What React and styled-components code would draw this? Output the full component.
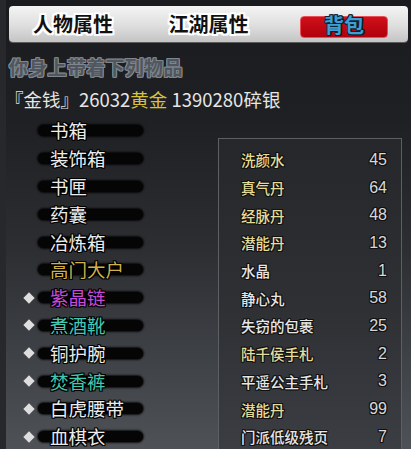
import React from 'react';
import styled, { createGlobalStyle } from 'styled-components';

const GlobalStyle = createGlobalStyle`
    html, body {
        margin: 0;
        padding: 0;
        overflow: hidden;
        background: #1b1c1f;
    }
    body {
        font-family: "Noto Sans CJK SC", "Noto Sans", sans-serif;
    }
`;

const outline = (c, w = 1) => `-${w}px -${w}px 0 ${c}, ${w}px -${w}px 0 ${c}, -${w}px ${w}px 0 ${c}, ${w}px ${w}px 0 ${c}, 0 ${w}px 0 ${c}, 0 -${w}px 0 ${c}, ${w}px 0 0 ${c}, -${w}px 0 0 ${c}`;

const Screen = styled.div`
    width: 411px;
    height: 449px;
    box-sizing: border-box;
    padding-top: 6px;
    background: linear-gradient(180deg, #1a1b1e 0px, #1f2023 120px, #2c2e32 250px, #4e5257 449px);
    border-left: 6px solid #26282b;
    overflow: hidden;
`;

const TabBar = styled.div`
    display: flex;
    gap: 47.5px;
    height: 36px;
    margin: 0 3px 0 3px;
    padding-left: 20px;
    box-sizing: border-box;
    border-radius: 4px;
    background: linear-gradient(180deg, #f4f4f4 0%, #dedede 55%, #c4c4c4 100%);
    box-shadow: 0 1px 0 #5a5a5a;
`;

const Tab = styled.div`
    width: 88px;
    height: 22px;
    margin-top: 10px;
    box-sizing: border-box;
    border-radius: 4px;
    display: flex;
    justify-content: center;
    align-items: flex-start;
    font-size: 20px;
    font-weight: bold;
    line-height: 16px;
    white-space: nowrap;
    color: ${p => (p.$active ? '#3f9ed4' : '#111')};
    text-shadow: ${p => (p.$active ? outline('#0d2230') : `${outline('#ffffff', 2)}, ${outline('#ffffff')}`)};
    background: ${p => (p.$active ? 'linear-gradient(180deg, #d0101a, #b0000c)' : 'none')};
    border: ${p => (p.$active ? '1px solid #e85058' : 'none')};
`;

const Caption = styled.div`
    margin: 11px 0 0 3px;
    height: 28px;
    line-height: 28px;
    font-size: 19px;
    font-weight: bold;
    color: #50565d;
    text-shadow: ${outline('#80868d')};
    letter-spacing: 0.3px;
`;

const Money = styled.div`
    margin: 5px 0 0 -1px;
    height: 26px;
    line-height: 26px;
    font-size: 18.5px;
    color: #e6e6e6;
    white-space: nowrap;
`;

const Gold = styled.span`
    color: #d8c040;
`;

const Body = styled.div`
    display: flex;
    margin-top: 5px;
`;

const LeftList = styled.div`
    width: 212px;
    display: flex;
    flex-direction: column;
`;

const Row = styled.div`
    height: 27.8px;
    display: flex;
    align-items: center;
    padding-left: 19px;
`;

const DiamondSlot = styled.div`
    width: 13px;
    display: flex;
    align-items: center;
`;

const Diamond = styled.span`
    display: block;
    width: 8px;
    height: 8px;
    background: #dedede;
    transform: rotate(45deg);
`;

const Pill = styled.div`
    width: 105px;
    height: 11px;
    box-sizing: border-box;
    padding-left: 12px;
    border-radius: 6px;
    background: #050505;
    box-shadow: 0 0 2px 1px rgba(0, 0, 0, 0.8);
    display: flex;
    align-items: center;
    font-size: 18.5px;
    line-height: 11px;
    white-space: nowrap;
    color: ${p => p.$color};
    text-shadow: ${outline('#000')};
`;

const Panel = styled.div`
    width: 184px;
    margin-top: 21px;
    height: 340px;
    box-sizing: border-box;
    padding: 7px 14px 0 22px;
    border: 1px solid #5c5f64;
    background: linear-gradient(180deg, #25272a 0%, #2e3034 50%, #3d4045 100%);
`;

const PanelRow = styled.div`
    height: 27.7px;
    display: flex;
    align-items: center;
    justify-content: space-between;
`;

const ItemName = styled.span`
    font-size: 14.5px;
    font-weight: 500;
    white-space: nowrap;
    color: ${p => (p.$yellow ? '#e4dc98' : '#e6e6e6')};
    text-shadow: ${outline('#111')};
`;

const Count = styled.span`
    font-family: "Liberation Sans", Arial, sans-serif;
    font-size: 16px;
    color: #d8d8d8;
    text-shadow: ${outline('#111')};
`;

const tabs = ['人物属性', '江湖属性', '背包'];

const carried = [
    { name: '书箱', color: '#ececec' },
    { name: '装饰箱', color: '#ececec' },
    { name: '书匣', color: '#ececec' },
    { name: '药囊', color: '#ececec' },
    { name: '冶炼箱', color: '#ececec' },
    { name: '高门大户', color: '#d2b04c' },
    { name: '紫晶链', color: '#c84ad6', worn: true },
    { name: '煮酒靴', color: '#44c8b2', worn: true },
    { name: '铜护腕', color: '#ececec', worn: true },
    { name: '焚香裤', color: '#44c8ac', worn: true },
    { name: '白虎腰带', color: '#ececec', worn: true },
    { name: '血棋衣', color: '#ececec', worn: true },
];

const stock = [
    { name: '洗颜水', n: 45, yellow: true },
    { name: '真气丹', n: 64, yellow: true },
    { name: '经脉丹', n: 48, yellow: true },
    { name: '潜能丹', n: 13, yellow: true },
    { name: '水晶', n: 1 },
    { name: '静心丸', n: 58 },
    { name: '失窃的包裹', n: 25 },
    { name: '陆千侯手札', n: 2, yellow: true },
    { name: '平遥公主手札', n: 3 },
    { name: '潜能丹', n: 99, yellow: true },
    { name: '门派低级残页', n: 7 },
];

const App = () => (
    <>
        <GlobalStyle />
        <Screen>
            <TabBar>
                {tabs.map((t, i) => (
                    <Tab key={t} $active={i === 2}>{t}</Tab>
                ))}
            </TabBar>
            <Caption>你身上带着下列物品</Caption>
            <Money>『金钱』26032<Gold>黄金</Gold> 1390280碎银</Money>
            <Body>
                <LeftList>
                    {carried.map(e => (
                        <Row key={e.name}>
                            <DiamondSlot>{e.worn && <Diamond />}</DiamondSlot>
                            <Pill $color={e.color}>{e.name}</Pill>
                        </Row>
                    ))}
                </LeftList>
                <Panel>
                    {stock.map((e, i) => (
                        <PanelRow key={i}>
                            <ItemName $yellow={e.yellow}>{e.name}</ItemName>
                            <Count>{e.n}</Count>
                        </PanelRow>
                    ))}
                </Panel>
            </Body>
        </Screen>
    </>
);

export default App;
